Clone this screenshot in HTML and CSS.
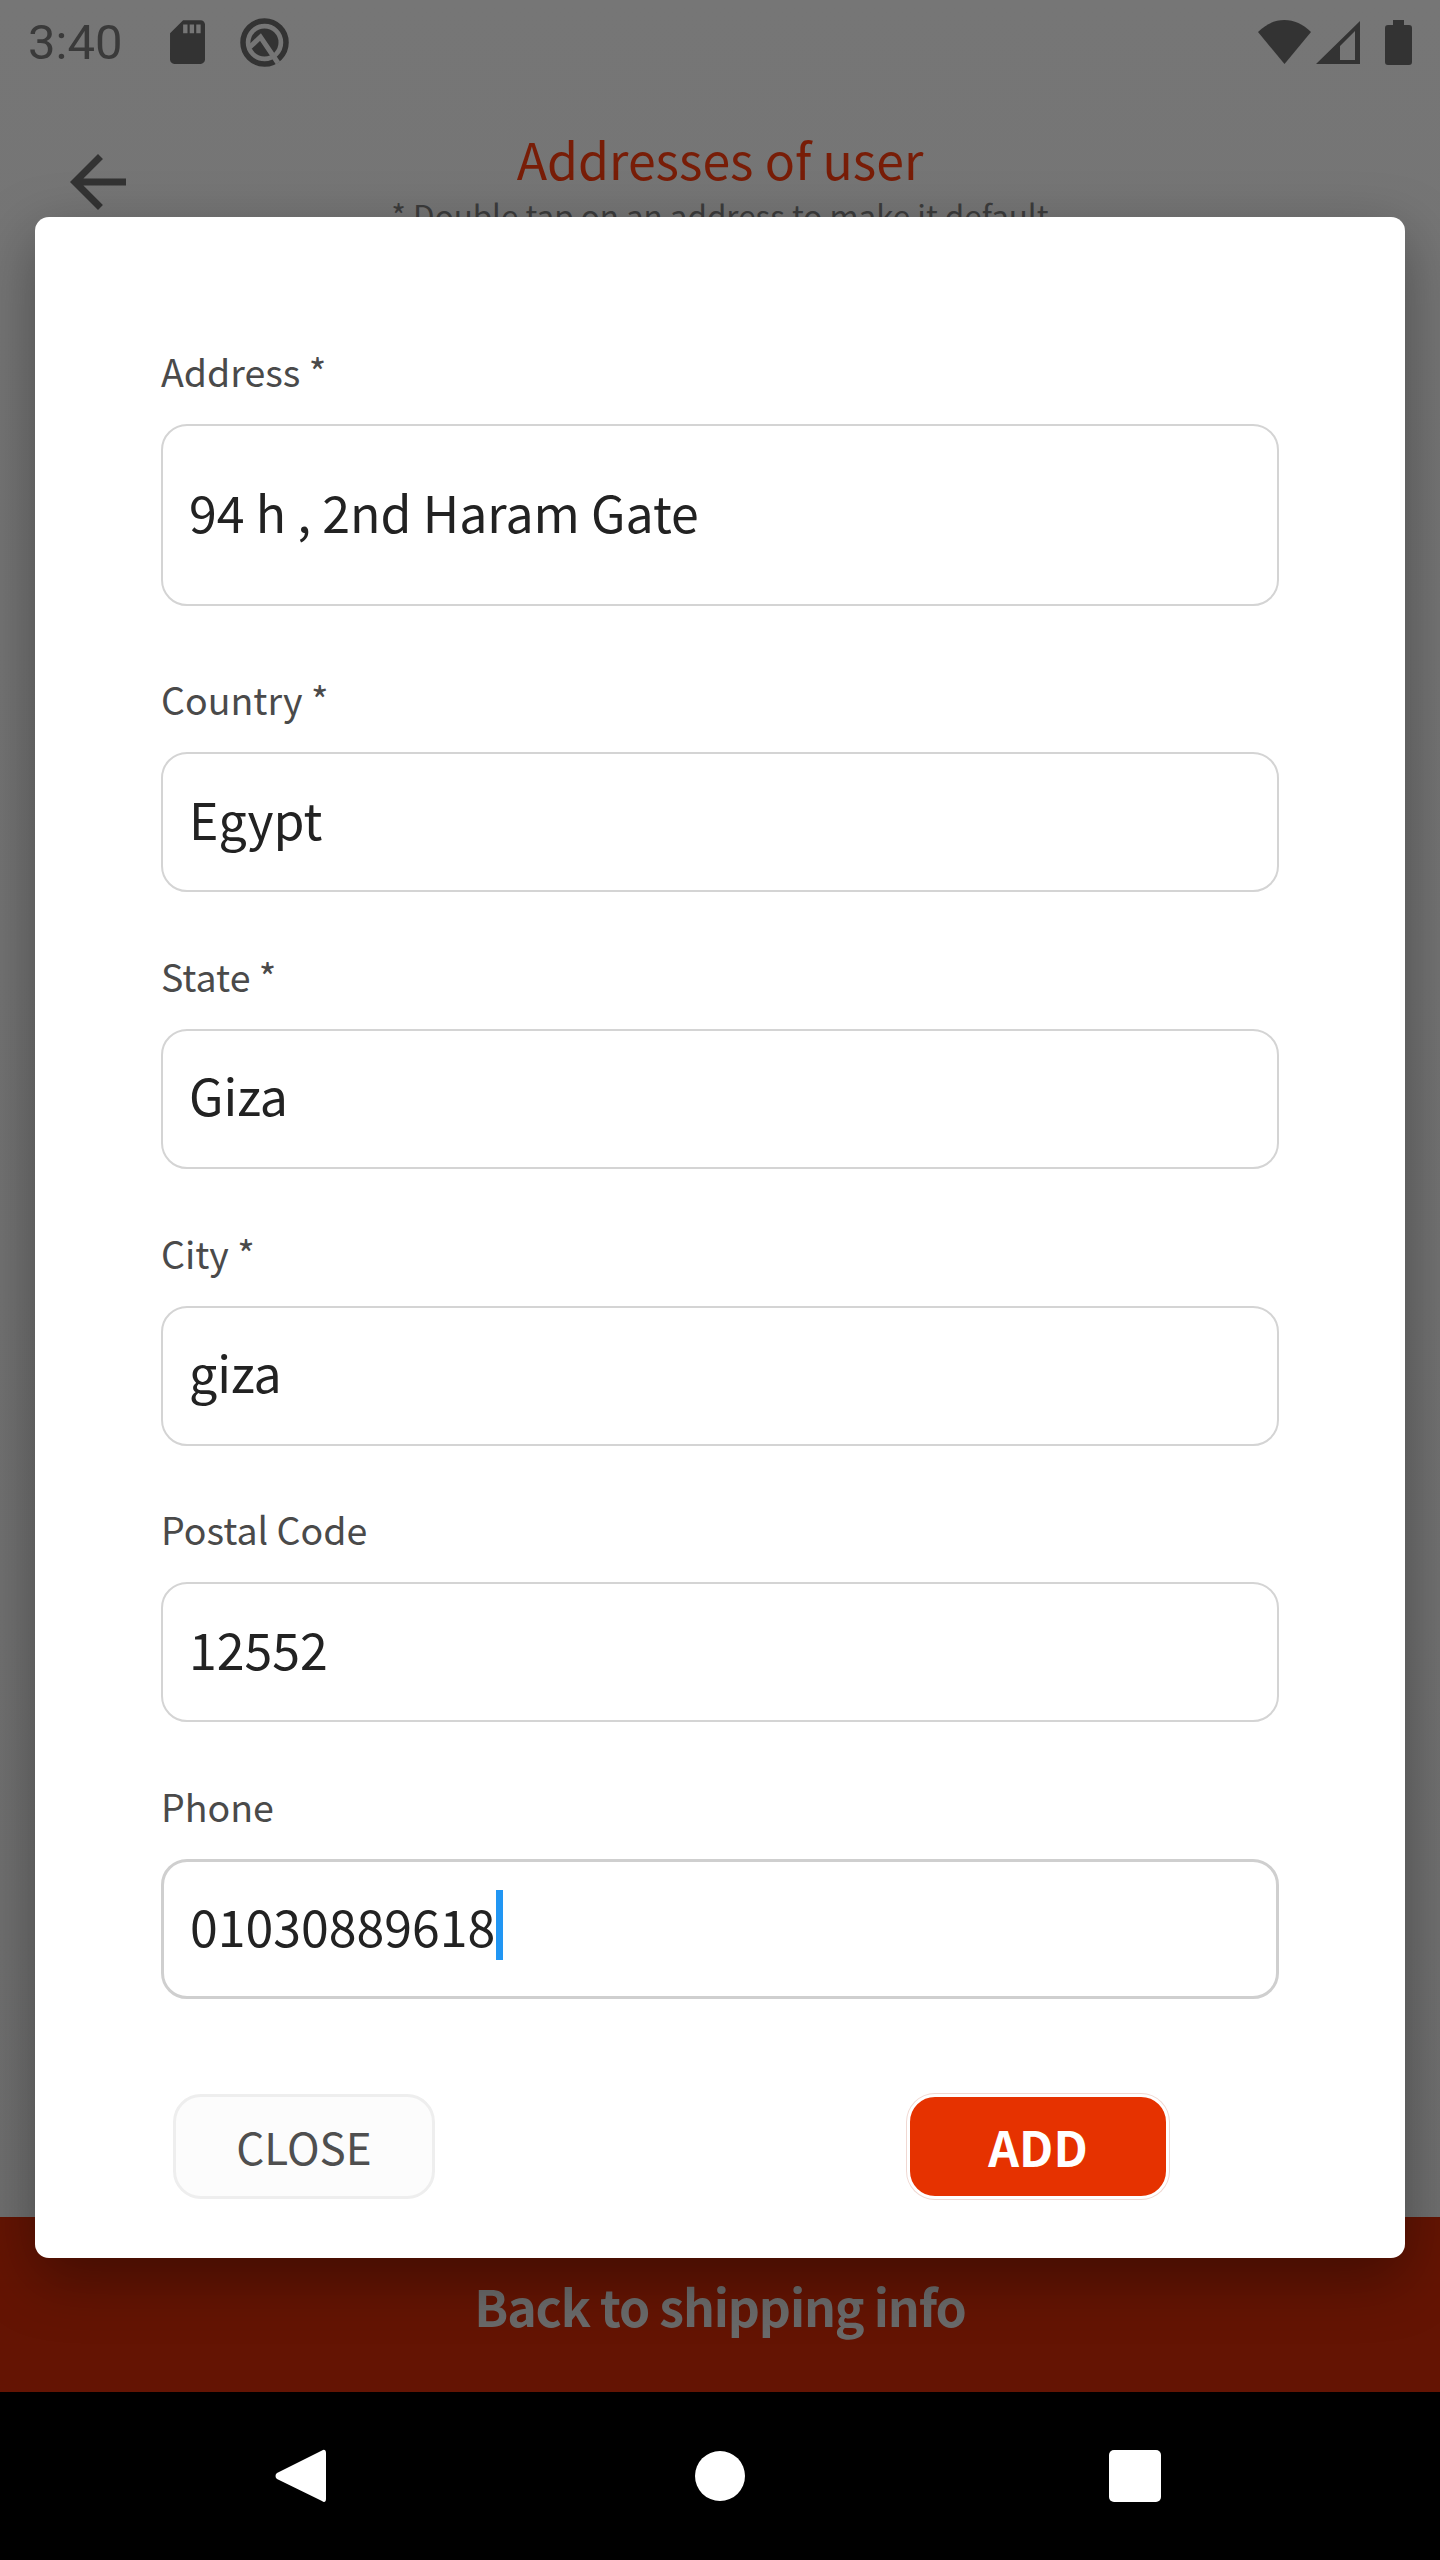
FILE: index.html
```html
<!DOCTYPE html>
<html lang="en">
<head>
    <meta charset="UTF-8">
    <meta name="viewport" content="width=device-width, initial-scale=1.0">
    <title>Addresses of user</title>
    <link rel="stylesheet" href="styles.css">
</head>
<body>
    <div class="page">
        <div class="statusbar">
            <div class="status-left">
                <span class="clock">3:40</span>
                <svg class="icon-sd" viewBox="4 2 16 20"><path fill-rule="evenodd" d="M18 2h-8L4.020 8 4 20c0 1.100.9 2 2 2h12c1.100 0 2-.9 2-2V4c0-1.100-.9-2-2-2zm-6 6h-2V4h2v4zm3 0h-2V4h2v4zm3 0h-2V4h2v4z"/></svg>
                <svg class="icon-q" viewBox="0 0 49 49">
                    <circle cx="24.500" cy="24.500" r="21.500" fill="none" stroke="#333" stroke-width="5.500"/>
                    <circle cx="24.500" cy="24.500" r="14"/>
                    <path d="M10 29L20.500 19L38 45" fill="none" stroke="#757575" stroke-width="5"/>
                </svg>
            </div>
            <div class="status-right">
                <svg class="icon-wifi" viewBox="0 0 53 44"><path d="M26.500 44L0 12C8 4 17 0 26.500 0C36 0 45 4 53 12Z"/></svg>
                <svg class="icon-signal" viewBox="0 0 44 43"><path fill-rule="evenodd" d="M44 0V43H0ZM39 10L24 25V39H39Z"/></svg>
                <svg class="icon-battery" viewBox="0 0 27 45"><path d="M8 0H19V5H24C26 5 27 6 27 8V42C27 44 26 45 24 45H3C1 45 0 44 0 42V8C0 6 1 5 3 5H8Z"/></svg>
            </div>
        </div>

        <div class="header">
            <svg class="icon-back" viewBox="0 0 24 24"><path d="M20 11H7.830l5.590-5.590L12 4l-8 8 8 8 1.410-1.410L7.830 13H20v-2z"/></svg>
            <div class="header-text">
                <div class="title">Addresses of user</div>
                <div class="subtitle">* Double tap on an address to make it default</div>
            </div>
        </div>

        <div class="spacer"></div>

        <div class="backbar">Back to shipping info</div>

        <div class="navbar">
            <svg class="nav-back" viewBox="0 0 52 54"><path d="M47 1.500C49 0 51 1 51 4V50C51 53 49 54 47 52L2 30C0 28.500 0 25.500 2 24Z"/></svg>
            <span class="nav-home"></span>
            <span class="nav-recent"></span>
        </div>
    </div>

    <div class="modal">
        <div class="field field-first">
            <div class="field-label">Address *</div>
            <div class="input input-tall">94 h , 2nd Haram Gate</div>
        </div>
        <div class="field">
            <div class="field-label">Country *</div>
            <div class="input">Egypt</div>
        </div>
        <div class="field">
            <div class="field-label">State *</div>
            <div class="input">Giza</div>
        </div>
        <div class="field">
            <div class="field-label">City *</div>
            <div class="input">giza</div>
        </div>
        <div class="field">
            <div class="field-label">Postal Code</div>
            <div class="input">12552</div>
        </div>
        <div class="field">
            <div class="field-label">Phone</div>
            <div class="input input-focus">01030889618<span class="caret"></span></div>
        </div>
        <div class="modal-buttons">
            <button class="btn btn-close">CLOSE</button>
            <button class="btn btn-add">ADD</button>
        </div>
    </div>
</body>
</html>
```

FILE: styles.css
```css
* {
    box-sizing: border-box;
}

body {
    margin: 0;
    font-family: "Noto Sans CJK JP", "Noto Sans", sans-serif;
}

.page {
    width: 1440px;
    height: 2560px;
    display: flex;
    flex-direction: column;
    background: linear-gradient(#767676, #6e6e6e);
}

/* Status bar */
.statusbar {
    height: 84px;
    padding: 0 28px;
    display: flex;
    justify-content: space-between;
    align-items: center;
    fill: #333;
}
.status-left, .status-right {
    display: flex;
    align-items: center;
}
.clock {
    width: 142px;
    font-family: Roboto, sans-serif;
    font-size: 49px;
    color: #3a3a3a;
}
.icon-sd { width: 35px; height: 44px; margin-right: 35px; }
.icon-q { width: 49px; height: 49px; }
.icon-wifi { width: 53px; height: 44px; margin-right: 5px; }
.icon-signal { width: 44px; height: 43px; margin-right: 25px; }
.icon-battery { width: 27px; height: 45px; }

/* Header, mostly covered by the dialog */
.header {
    height: 133px;
    padding: 56px 56px 0;
    display: grid;
    grid-template-columns: 84px 1fr 84px;
}
.icon-back { width: 84px; height: 84px; fill: #333; }
.header-text { text-align: center; }
.title {
    margin-top: -20px;
    font-size: 50px;
    line-height: 76px;
    color: #781d07;
}
.subtitle {
    margin-top: -3px;
    font-size: 31.400px;
    line-height: 44px;
    color: #3c3c3c;
}

.spacer { flex: 1; }

.backbar {
    height: 175px;
    line-height: 176px;
    text-align: center;
    font-size: 50px;
    font-weight: 700;
    letter-spacing: -1.15px;
    color: #6a6a6a;
    background: #641403;
}

.navbar {
    height: 168px;
    padding: 0 279px 0 275px;
    display: flex;
    justify-content: space-between;
    align-items: center;
    background: #000;
    fill: #fff;
}
.nav-back { width: 52px; height: 56px; }
.nav-home { width: 50px; height: 50px; margin-left: 4px; border-radius: 50%; background: #fff; }
.nav-recent { width: 52px; height: 52px; border-radius: 5px; background: #fff; }

/* Dialog */
.modal {
    position: absolute;
    left: 35px;
    top: 217px;
    width: 1370px;
    height: 2041px;
    padding: 128px 126px 0;
    background: #fff;
    border-radius: 14px;
    box-shadow: 0 20px 60px rgba(0, 0, 0, 0.35);
}
.field {
    margin-bottom: 57.800px;
}
.field-first {
    margin-bottom: 67px;
}
.field-label {
    height: 79px;
    font-size: 37.500px;
    line-height: 52px;
    color: #4a4a4a;
}
.input {
    height: 140px;
    padding: 0 0 9px 26px;
    display: flex;
    align-items: center;
    font-size: 50px;
    color: #222;
    border: 2px solid #d4d4d4;
    border-radius: 26px;
}
.input-tall { height: 182px; }
.input-focus { border: 3px solid #cfcfcf; }
.caret {
    width: 7px;
    height: 70px;
    margin: 0 0 0 1px;
    background: #2196f3;
}

.modal-buttons {
    margin-top: 95px;
    padding: 0 11px 0 12px;
    display: flex;
    gap: 472px;
}
.btn {
    width: 262px;
    height: 105px;
    padding: 0 0 2px;
    font-family: inherit;
    font-size: 44px;
    border-radius: 28px;
}
.btn-close {
    color: #4f4f4f;
    background: #fcfcfc;
    border: 3px solid #eee;
}
.btn-add {
    font-size: 48px;
    font-weight: 700;
    color: #fff;
    background: #e63200;
    border: 3px solid #fff;
    box-shadow: 0 0 0 1px #f0d8d2;
}
```
